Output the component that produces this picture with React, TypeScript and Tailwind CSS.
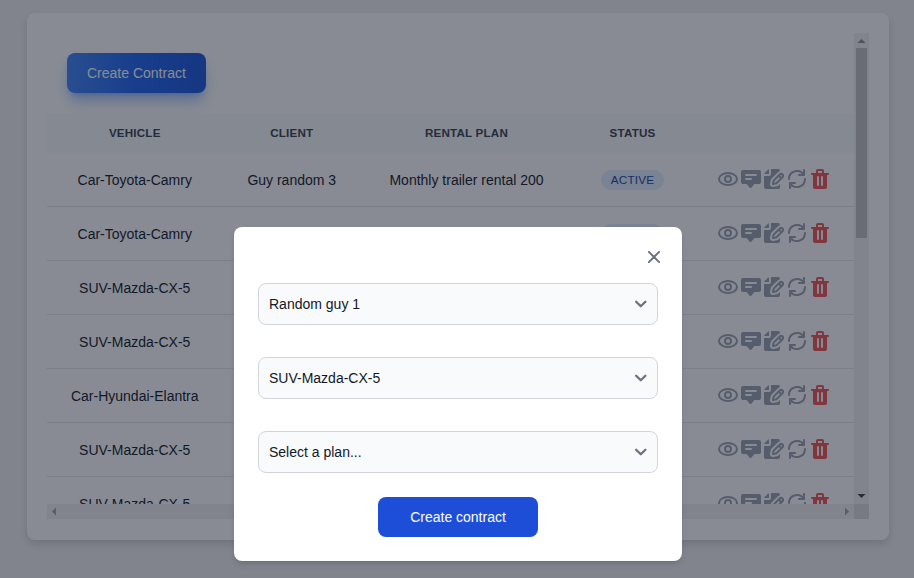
import React from "react";

const vehicles = [
  "Car-Toyota-Camry",
  "Car-Toyota-Camry",
  "SUV-Mazda-CX-5",
  "SUV-Mazda-CX-5",
  "Car-Hyundai-Elantra",
  "SUV-Mazda-CX-5",
  "SUV-Mazda-CX-5",
];

const columns = "grid grid-cols-[175.5px_138.5px_211px_121px_161px] items-center text-center";

const outline = {
  fill: "none",
  stroke: "currentColor",
  strokeLinecap: "round" as const,
  strokeLinejoin: "round" as const,
};

function Actions() {
  return (
    <div className="flex justify-center gap-[3px] pb-0.5 pl-px text-gray-400">
      <svg className="h-5 w-5" viewBox="0 0 20 14" strokeWidth={2} {...outline}>
        <path d="M10 10a3 3 0 1 0 0-6 3 3 0 0 0 0 6Z" />
        <path d="M10 13c4.97 0 9-2.686 9-6s-4.03-6-9-6-9 2.686-9 6 4.03 6 9 6Z" />
      </svg>
      <svg className="h-5 w-5" viewBox="0 0 20 18" fill="currentColor">
        <path d="M18 0H2a2 2 0 0 0-2 2v10a2 2 0 0 0 2 2h3.546l3.2 3.659a1 1 0 0 0 1.506 0L13.454 14H18a2 2 0 0 0 2-2V2a2 2 0 0 0-2-2Zm-8 10H5a1 1 0 0 1 0-2h5a1 1 0 1 1 0 2Zm5-4H5a1 1 0 0 1 0-2h10a1 1 0 1 1 0 2Z" />
      </svg>
      <svg className="h-5 w-5" viewBox="0 0 20 20" fill="currentColor">
        <path d="M5 5V.13a2.96 2.96 0 0 0-1.293.749L.879 3.707A2.98 2.98 0 0 0 .13 5H5Z" />
        <path d="M6.737 11.061a2.961 2.961 0 0 1 .81-1.515l6.117-6.116A4.839 4.839 0 0 1 16 2.141V2a1.97 1.97 0 0 0-1.933-2H7v5a2 2 0 0 1-2 2H0v11a1.969 1.969 0 0 0 1.933 2h12.134A1.97 1.97 0 0 0 16 18v-3.093l-1.546 1.546c-.413.413-.94.695-1.513.81l-3.4.679a2.947 2.947 0 0 1-1.85-.227 2.96 2.96 0 0 1-1.635-3.257l.681-3.397Z" />
        <path d="M8.961 16a.93.93 0 0 0 .189-.019l3.4-.679a.961.961 0 0 0 .49-.263l6.118-6.117a2.884 2.884 0 0 0-4.079-4.078l-6.117 6.117a.96.96 0 0 0-.263.491l-.679 3.4A.961.961 0 0 0 8.961 16Zm7.477-9.8a.958.958 0 0 1 .68-.281.961.961 0 0 1 .682 1.644l-.315.315-1.36-1.36.313-.318Zm-5.911 5.911 4.236-4.236 1.359 1.359-4.236 4.237-1.7.339.341-1.699Z" />
      </svg>
      <svg className="h-5 w-5" viewBox="0 0 18 20" strokeWidth={2} {...outline}>
        <path d="M16 1v5h-5M2 19v-5h5m10-4a8 8 0 0 1-14.947 3.97M1 10a8 8 0 0 1 14.947-3.97" />
      </svg>
      <svg className="h-5 w-5 text-[#f05252]" viewBox="0 0 18 20" fill="currentColor">
        <path d="M17 4h-4V2a2 2 0 0 0-2-2H7a2 2 0 0 0-2 2v2H1a1 1 0 0 0 0 2h1v12a2 2 0 0 0 2 2h10a2 2 0 0 0 2-2V6h1a1 1 0 1 0 0-2ZM7 2h4v2H7V2Zm1 14a1 1 0 1 1-2 0V8a1 1 0 0 1 2 0v8Zm4 0a1 1 0 0 1-2 0V8a1 1 0 0 1 2 0v8Z" />
      </svg>
    </div>
  );
}

function Row({ vehicle }: { vehicle: string }) {
  return (
    <div className={`${columns} h-[54px] shrink-0 border-b border-[#e5e7eb] text-[#111827]`}>
      <div>{vehicle}</div>
      <div>Guy random 3</div>
      <div>Monthly trailer rental 200</div>
      <div className="flex justify-center">
        <span className="rounded-full bg-[#e1effe] px-2.5 py-0.5 text-[11.7px] leading-4 tracking-[0.2px] text-[#1e429f]">
          ACTIVE
        </span>
      </div>
      <Actions />
    </div>
  );
}

function SelectField({ value }: { value: string }) {
  return (
    <button className="flex h-[42px] w-full items-center justify-between rounded-lg border border-[#d1d5db] bg-[#f9fafb] pr-[10.5px] pl-2.5 text-left text-[#111827]">
      <span>{value}</span>
      <svg className="h-3 w-3 text-[#6b7280]" viewBox="0 0 10.4 6" strokeWidth={2} {...outline}>
        <path d="m1 1 4 4 4-4" />
      </svg>
    </button>
  );
}

export default function App() {
  return (
    <div className="relative h-[578px] w-[914px] overflow-hidden bg-[#f0f1f3] px-[27px] pt-[13px] pr-[25px] font-['Liberation_Sans',Arial,sans-serif] text-sm">
      <main className="h-[527px] w-[862px] rounded-lg bg-white p-5 shadow-[0_4px_8px_rgba(0,0,0,0.15)]">
        <div className="grid h-[486px] grid-cols-[807px_15px] grid-rows-[471px_15px]">
          <div className="flex flex-col overflow-hidden">
            <div className="h-20 shrink-0 p-5">
              <button className="h-10 rounded-lg bg-gradient-to-r from-[#3f83f8] via-[#1c64f2] to-[#1a56db] px-5 font-medium text-white shadow-lg shadow-[#3f83f8]/50">
                Create Contract
              </button>
            </div>
            <div className={`${columns} h-10 shrink-0 bg-[#f9fafb] text-[11.6px] font-bold tracking-[0.2px] text-[#374151]`}>
              <div>VEHICLE</div>
              <div>CLIENT</div>
              <div>RENTAL PLAN</div>
              <div>STATUS</div>
              <div />
            </div>
            {vehicles.map((vehicle, i) => (
              <Row key={i} vehicle={vehicle} />
            ))}
          </div>
          <div className="flex flex-col items-center bg-[#f1f1f1]">
            <svg className="h-[15px] w-[15px] shrink-0" viewBox="0 0 15 15">
              <path d="M3.5 10 7.5 6 11.5 10Z" fill="#8b8b8b" />
            </svg>
            <div className="h-[190px] w-[11px] bg-[#c1c1c1]" />
            <svg className="mt-auto h-[15px] w-[15px]" viewBox="0 0 15 15">
              <path d="M3.5 5 7.5 9 11.5 5Z" fill="#404040" />
            </svg>
          </div>
          <div className="flex justify-between bg-[#f1f1f1]">
            <svg className="h-[15px] w-[15px]" viewBox="0 0 15 15">
              <path d="M9 3.5 5 7.5 9 11.5Z" fill="#a3a3a3" />
            </svg>
            <svg className="h-[15px] w-[15px]" viewBox="0 0 15 15">
              <path d="M6 3.5 10 7.5 6 11.5Z" fill="#a3a3a3" />
            </svg>
          </div>
          <div className="bg-[#dcdcdc]" />
        </div>
      </main>

      <div className="absolute inset-0 bg-[#111827]/50" />

      <div className="absolute top-[227px] left-[234px] flex h-[334px] w-[448px] flex-col rounded-lg bg-white px-6 pt-3.5 pb-6 shadow-md">
        <button className="-mr-3 flex h-8 w-8 items-center justify-center self-end text-[#6b7280]" aria-label="Close">
          <svg className="h-3 w-3" viewBox="0 0 14 14" strokeWidth={2.3} {...outline}>
            <path d="m1 1 6 6m0 0 6 6M7 7l6-6M7 7l-6 6" />
          </svg>
        </button>
        <div className="mt-2.5 flex flex-col gap-8">
          <SelectField value="Random guy 1" />
          <SelectField value="SUV-Mazda-CX-5" />
          <SelectField value="Select a plan..." />
        </div>
        <button className="mt-6 h-10 w-40 self-center rounded-lg bg-[#1d4ed8] font-medium text-white">
          Create contract
        </button>
      </div>
    </div>
  );
}
